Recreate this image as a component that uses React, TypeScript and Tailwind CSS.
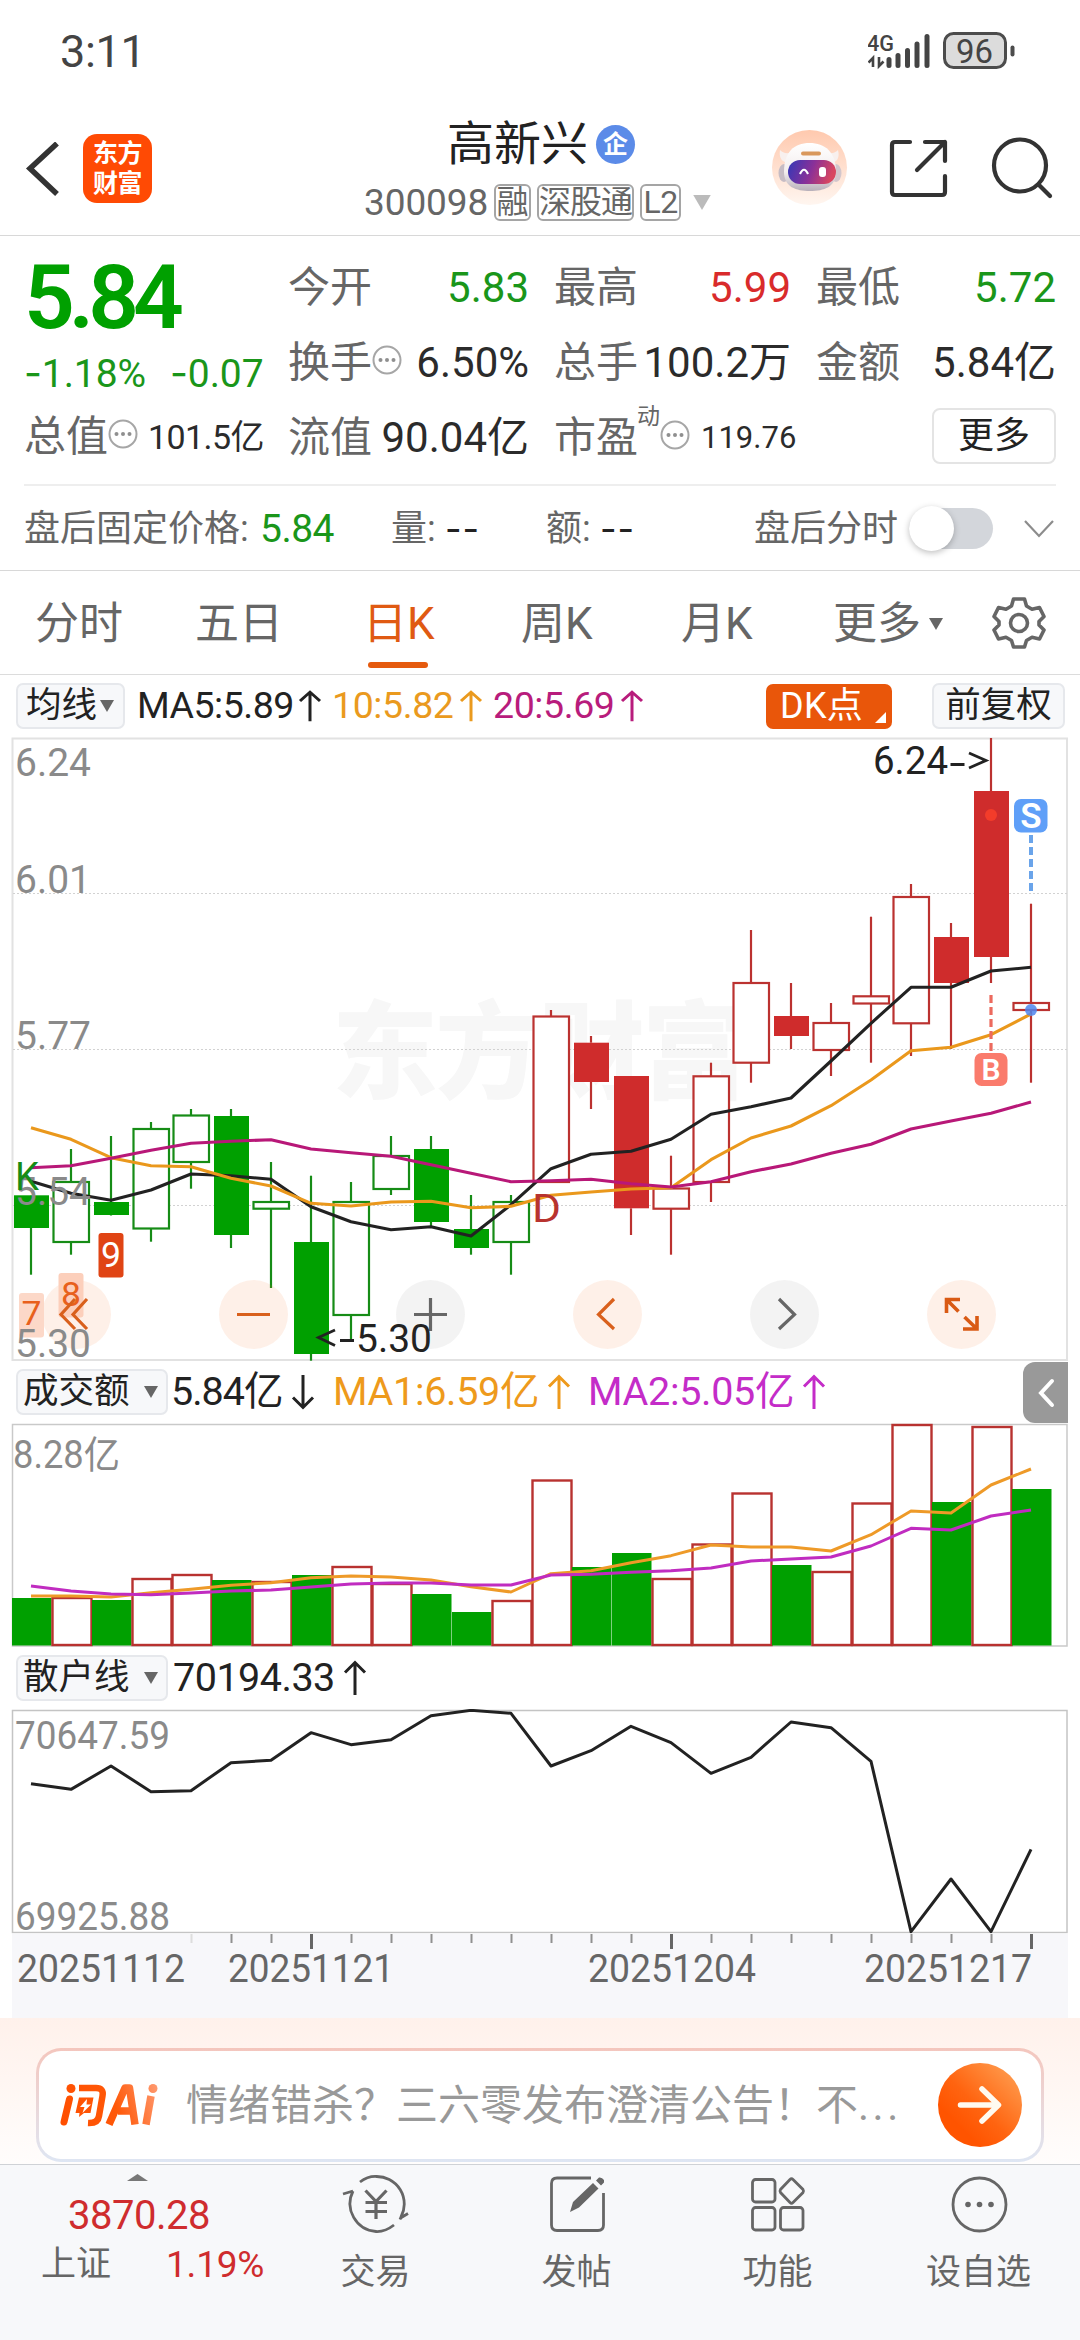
import React from "react";

type Candle = {
  kind: "gf" | "gh" | "rf" | "rh";
  top: number;
  bottom: number;
  high: number;
  low: number;
};

const GREEN = "#00a000";
const RED = "#cf2c2c";

const c = (kind: Candle["kind"], top: number, bottom: number, high: number, low: number): Candle => ({ kind, top, bottom, high, low });

const candles: Candle[] = [
  c("gf", 1195.3, 1228, 1195, 1274.7),
  c("gh", 1182, 1242, 1149, 1254.7),
  c("gf", 1202, 1215, 1136, 1215.5),
  c("gh", 1129, 1228.5, 1122, 1241.7),
  c("gh", 1115.5, 1162, 1109, 1188.7),
  c("gf", 1116, 1235, 1109, 1248),
  c("gh", 1202, 1208.7, 1162, 1288),
  c("gf", 1242, 1354, 1175.7, 1360.7),
  c("gh", 1202, 1315, 1182, 1340),
  c("gh", 1156, 1189, 1136, 1195),
  c("gf", 1149, 1222, 1136, 1226),
  c("gf", 1229, 1248, 1195, 1254.7),
  c("gh", 1202, 1242, 1195, 1274.7),
  c("rh", 1016.5, 1182, 1010, 1182),
  c("rf", 1042.7, 1082, 1036, 1109),
  c("rf", 1076, 1208.3, 1076, 1235),
  c("rh", 1188.5, 1208.7, 1155.7, 1254.7),
  c("rh", 1076.3, 1182, 1062.7, 1202),
  c("rh", 983, 1062.7, 930, 1082.7),
  c("rf", 1016, 1036, 983, 1049),
  c("rh", 1023, 1050, 1003, 1076),
  c("rh", 996.3, 1003.5, 916.7, 1062.7),
  c("rh", 897, 1023.3, 884, 1056),
  c("rf", 937, 983, 923, 1049),
  c("rf", 791, 957, 738, 983),
  c("rh", 1003, 1010, 903.7, 1082.7),
];

const ma5 = [1181.3, 1193.3, 1200.3, 1190, 1174, 1175.7, 1179.3, 1206.7, 1221.7, 1229.7, 1226.7, 1236, 1204.7, 1168.7, 1154.3, 1151.3, 1139.3, 1114.3, 1106.7, 1098, 1061, 1023.3, 987.3, 987.3, 971, 967.3];
const ma10 = [1127.7, 1139.3, 1157.7, 1165.7, 1166.7, 1178.3, 1186, 1203.3, 1206, 1202, 1201.3, 1207.7, 1206.3, 1195.3, 1192, 1189, 1187.7, 1159.7, 1138, 1126, 1105.7, 1080, 1050.7, 1047.3, 1034.7, 1014];
const ma20 = [1167.7, 1165.7, 1158.3, 1150.3, 1143.3, 1141.3, 1139.7, 1149, 1152.7, 1156.3, 1164.7, 1173.3, 1181.7, 1180.7, 1179.3, 1183.7, 1187, 1181.7, 1171.7, 1164, 1153.3, 1144.3, 1129, 1121, 1113.3, 1102];

const volumes: [string, number][] = [
  ["g", 1598], ["r", 1598], ["g", 1600], ["r", 1579], ["r", 1575], ["g", 1580], ["r", 1582], ["g", 1575], ["r", 1567],
  ["r", 1584], ["g", 1594], ["g", 1612], ["r", 1601], ["r", 1480.5], ["g", 1567], ["g", 1553], ["r", 1579], ["r", 1544.5],
  ["r", 1493.5], ["g", 1565], ["r", 1572], ["r", 1503.5], ["r", 1425], ["g", 1502], ["r", 1427], ["g", 1489],
];
const volMa1 = [708, 708, 711, 698, 688, 676, 668, 653, 648, 651, 660, 680, 696, 641, 632, 608, 587, 555, 561, 561, 573, 524, 453, 459, 375, 327].map((v) => 1360 + v / 3);
const volMa2 = [678, 693, 702, 704, 699, 693, 690, 681, 672, 669, 669, 675, 675, 645, 643, 637, 632, 624, 603, 597, 591, 558, 505, 510, 468, 450].map((v) => 1360 + v / 3);
const retail = [401, 418, 348, 425, 422, 338, 331, 248, 284, 269, 197, 181, 190, 348, 302, 229, 278, 370, 322, 216, 233, 334, 845, 687, 845, 598].map((v) => 1650 + v / 3);

const cx = (i: number) => 31 + i * 40;
const pts = (ys: number[]) => ys.map((y, i) => `${cx(i)},${y}`).join(" ");

const CandleShape = ({ d, i }: { d: Candle; i: number }) => {
  const color = d.kind[0] === "g" ? GREEN : RED;
  const line = d.kind[0] === "g" ? "#168c16" : "#bb3230";
  const x = cx(i);
  return (
    <g>
      {d.high < d.top && <line x1={x} x2={x} y1={d.high} y2={d.top} stroke={line} strokeWidth="2.2" />}
      {d.low > d.bottom && <line x1={x} x2={x} y1={d.bottom} y2={d.low} stroke={line} strokeWidth="2.2" />}
      {d.kind[1] === "f" ? (
        <rect x={x - 17} y={d.top} width="35" height={d.bottom - d.top} fill={color} />
      ) : (
        <rect x={x - 17.5} y={d.top} width="35.5" height={d.bottom - d.top} fill="#fff" stroke={line} strokeWidth="2.2" />
      )}
    </g>
  );
};

const Label = ({ x, y, w, size = 38, fill = "#8a8a8a", children }: { x: number; y: number; w: number; size?: number; fill?: string; children: string }) => (
  <text x={x} y={y} textLength={w} lengthAdjust="spacingAndGlyphs" fontSize={size} fill={fill}>
    {children}
  </text>
);

const Hy = ({ n = 1 }: { n?: number }) => <span className="font-['Inter']">{"-".repeat(n)}</span>;

const Dots = () => (
  <svg className="size-[30px] shrink-0 -translate-y-[3px]" viewBox="0 0 30 30">
    <circle cx="15" cy="15" r="13.5" fill="none" stroke="#a6a6a6" strokeWidth="2" />
    {[8.5, 15, 21.5].map((x) => (
      <circle key={x} cx={x} cy="15" r="2" fill="#8f8f8f" />
    ))}
  </svg>
);

const Tri = ({ className }: { className: string }) => (
  <svg className={className} viewBox="0 0 14 12">
    <path d="M0 0H14L7 12Z" fill="currentColor" />
  </svg>
);

const Arrow = ({ className = "" }: { className?: string }) => (
  <svg className={`h-[34px] w-[20px] shrink-0 overflow-visible ${className}`} viewBox="0 0 20 34" fill="none" stroke="currentColor" strokeWidth="3">
    <path d="M10 34V1.500M0 11.500L10 1.500L20 11.500" />
  </svg>
);

const StatusBar = () => (
  <div className="flex h-[102px] items-center pl-[60px] text-[#444]">
    <span className="w-[808px] text-[45px] leading-none tracking-[-0.3px]">3:11</span>
    <svg className="h-[40px] w-[150px]" viewBox="868 31 150 40">
      <text x="867" y="51" fontSize="22.500" fontWeight="500" textLength="27" lengthAdjust="spacingAndGlyphs" fill="#444">4G</text>
      <path d="M873 67V58L868.500 62.500M879 57V66L883.500 61.500" stroke="#444" strokeWidth="2.600" fill="none" />
      {[[889, 58], [898, 54], [907.5, 49], [917, 42.5], [927, 35]].map(([x, y]) => (
        <line key={x} x1={x} x2={x} y1={y + 1.5} y2="65.500" stroke="#444" strokeWidth="5" strokeLinecap="round" />
      ))}
      <rect x="944.500" y="33.500" width="61" height="34" rx="9" fill="#dcdcdc" stroke="#4c4c4c" strokeWidth="3" />
      <rect x="1010.500" y="45.500" width="4" height="11" rx="2" fill="#4c4c4c" />
      <text x="956" y="62.500" fontSize="34" textLength="37" lengthAdjust="spacingAndGlyphs" fill="#444">96</text>
    </svg>
  </div>
);

const Header = () => (
  <div className="flex h-[133px] items-start">
    <svg className="mt-[40px] ml-[24px] h-[54px] w-[38px]" viewBox="0 0 38 54" fill="none" stroke="#333" strokeWidth="5.500">
      <path d="M33 1.500L6 26.500L33 52" />
    </svg>
    <div className="mt-[32px] ml-[21px] flex h-[69px] w-[69px] flex-col items-center justify-center rounded-[14px] bg-[#ff4a04] text-[25px] leading-[30px] font-bold tracking-[-0.5px] text-white">
      <span>东方</span>
      <span>财富</span>
    </div>
    <div className="ml-[212px] w-[360px] pt-[16px]">
      <div className="flex items-center pl-[83px]">
        <span className="text-[47px] leading-[52px] text-[#222]">高新兴</span>
        <span className="mt-[1px] ml-[8px] flex size-[39px] items-center justify-center rounded-full bg-[#5b8be8] text-[25px] leading-none font-bold text-white">企</span>
      </div>
      <div className="mt-[13px] flex h-[38px] items-center gap-[6px] text-[32px] leading-none text-[#666]">
        <span className="w-[124px] text-[37px] tracking-[-0.1px]">300098</span>
        <span className="flex h-[37px] w-[37px] items-center justify-center rounded-[6px] border-2 border-[#a5a5a5]">融</span>
        <span className="flex h-[37px] w-[97px] items-center justify-center rounded-[6px] border-2 border-[#a5a5a5] tracking-[-1px]">深股通</span>
        <span className="flex h-[37px] w-[41px] items-center justify-center rounded-[6px] border-2 border-[#a5a5a5] tracking-[-0.5px]">L2</span>
        <Tri className="ml-[4px] h-[15px] w-[22px] shrink-0 text-[#bbb]" />
      </div>
    </div>
    <svg className="ml-[48px] h-[76px] w-[76px] translate-y-[28px]" viewBox="0 0 76 76">
      <defs>
        <linearGradient id="halo" x1="0" y1="0" x2="0" y2="1">
          <stop offset="0" stopColor="#ffc9ae" />
          <stop offset="1" stopColor="#fff6f0" />
        </linearGradient>
        <linearGradient id="visor" x1="0" y1="0" x2="1" y2="0.200">
          <stop offset="0" stopColor="#3238b8" />
          <stop offset="0.550" stopColor="#8a3098" />
          <stop offset="1" stopColor="#d84660" />
        </linearGradient>
        <linearGradient id="helmet" x1="0" y1="0" x2="0" y2="1">
          <stop offset="0" stopColor="#fff" />
          <stop offset="0.600" stopColor="#f3eeee" />
          <stop offset="1" stopColor="#b8b0ba" />
        </linearGradient>
      </defs>
      <circle cx="37.500" cy="37.500" r="37.500" fill="url(#halo)" />
      <path d="M8 20Q6 32 17 33L22 22Q12 25 8 20ZM66 20Q69 32 58 33L52 22Q62 25 66 20Z" fill="#f8f0ee" />
      <ellipse cx="12" cy="43" rx="5.500" ry="9" fill="#c6bcc4" />
      <ellipse cx="64" cy="43" rx="5.500" ry="9" fill="#d2c6cc" />
      <path d="M12 42C12 22 22 13 37.500 13S64 22 64 42C64 57 52 61 38 61S12 57 12 42Z" fill="url(#helmet)" />
      <rect x="29" y="21.500" width="20" height="4" rx="2" fill="#d9985c" />
      <rect x="16" y="30" width="48" height="24" rx="12" fill="url(#visor)" />
      <path d="M28 44Q32 35.500 36 44" fill="none" stroke="#fff" strokeWidth="2.200" />
      <rect x="47" y="37" width="7" height="10" rx="3" fill="#fff" />
    </svg>
    <svg className="mt-[36px] ml-[40px] h-[62px] w-[62px]" viewBox="0 0 62 62" fill="none" stroke="#333" strokeWidth="4.200" strokeLinecap="round" strokeLinejoin="round">
      <path d="M22 4H7Q4 4 4 7V54Q4 57 7 57H54Q57 57 57 54V38M37 4H57V23M57 4L29 32" />
    </svg>
    <svg className="mt-[34px] ml-[39px] h-[66px] w-[66px]" viewBox="0 0 66 66" fill="none" stroke="#333" strokeWidth="4.200" strokeLinecap="round">
      <circle cx="31" cy="29.500" r="26" />
      <path d="M50 49L61 60" />
    </svg>
  </div>
);

const Cell = ({ label, children, tone = "text-[#2b2b2b]" }: { label: React.ReactNode; children: React.ReactNode; tone?: string }) => (
  <div className="flex items-center justify-between">
    <span className="flex items-center text-[#666]">{label}</span>
    <span className={tone}>{children}</span>
  </div>
);

const Quote = () => (
  <div className="border-b border-[#d8d8d8] text-[42px] leading-none">
    <div className="flex pt-[14px] pl-[24px]">
      <div className="w-[264px]">
        <div className="pt-[4px] text-[89px] leading-[88px] font-semibold tracking-[-6px] text-[#00a000]">5.84</div>
        <div className="mt-[3px] flex h-[56px] items-center text-[39px] tracking-[-0.1px] text-[#1a961a]">
          <span className="w-[146px]"><Hy />1.18%</span>
          <span><Hy />0.07</span>
        </div>
        <div className="flex h-[72px] items-center text-[#666]">
          <span>总值</span>
          <Dots />
          <span className="ml-[10px] text-[34px] tracking-[-0.6px] text-[#2b2b2b]">101.5亿</span>
        </div>
      </div>
      <div className="grid grid-cols-[241px_237px_240px] grid-rows-[75px_75px_75px] gap-x-[25px]">
        <Cell label="今开" tone="text-[#1a961a]">5.83</Cell>
        <Cell label="最高" tone="text-[#d92b2b]">5.99</Cell>
        <Cell label="最低" tone="text-[#1a961a]">5.72</Cell>
        <Cell label={<>换手<Dots /></>}>6.50%</Cell>
        <Cell label="总手">100.2万</Cell>
        <Cell label="金额">5.84亿</Cell>
        <Cell label="流值">90.04亿</Cell>
        <div className="flex items-center text-[#666]">
          <span>市盈</span>
          <span className="-mt-[42px] ml-[-1px] text-[23px]">动</span>
          <Dots />
          <span className="ml-[11px] text-[31px] text-[#2b2b2b]">119.76</span>
        </div>
        <div className="flex items-center justify-end">
          <button className="h-[56px] w-[124px] -translate-y-[2px] rounded-[8px] border-2 border-[#e4e4e4] text-[36px] leading-none text-[#222]">更多</button>
        </div>
      </div>
    </div>
    <div className="mx-[24px] mt-[9px] h-[2px] bg-[#eeeeee]" />
    <div className="flex h-[84px] items-center pt-[2px] pl-[24px] text-[36px] text-[#666]">
      <span className="w-[236px]">盘后固定价格:</span>
      <span className="w-[131px] text-[39px] tracking-[-0.5px] text-[#1a961a]">5.84</span>
      <span className="w-[54px]">量:</span>
      <span className="w-[101px] tracking-[1px] text-[#222]"><Hy n={2} /></span>
      <span className="w-[54px]">额:</span>
      <span className="w-[154px] tracking-[1px] text-[#222]"><Hy n={2} /></span>
      <span className="w-[155px]">盘后分时</span>
      <span className="relative h-[41px] w-[84px] -translate-y-px rounded-full bg-[#d3d6db]">
        <span className="absolute top-[-2px] left-0 size-[45px] rounded-full bg-white shadow-[0_2px_6px_rgba(0,0,0,0.25)]" />
      </span>
      <svg className="ml-[31px] h-[18px] w-[30px]" viewBox="0 0 30 18" fill="none" stroke="#8c8c8c" strokeWidth="2.200">
        <path d="M1 1L15 16L29 1" />
      </svg>
    </div>
  </div>
);

const Tabs = () => (
  <div className="flex h-[104px] items-center border-b border-[#dcdcdc] pt-[2px] pl-[35px] text-[44px] leading-none text-[#666]">
    <span className="w-[160px]">分时</span>
    <span className="w-[168px]">五日</span>
    <span className="relative w-[158px] text-[#e05a12]">
      日K
      <span className="absolute bottom-[-22px] left-[5px] h-[6px] w-[60px] rounded-full bg-[#e55a0e]" />
    </span>
    <span className="w-[160px]">周K</span>
    <span className="w-[152px]">月K</span>
    <span className="w-[96px]">更多</span>
    <Tri className="h-[12px] w-[14px] text-[#666]" />
    <svg className="ml-[49px] h-[54px] w-[54px] -translate-y-px" viewBox="0 0 54 54" fill="none" stroke="#666" strokeWidth="3.600" strokeLinejoin="round">
      <path d="M21.500 3H32.500L34.500 10L40 13.200L47.500 11.500L52 20.500L47 25.500V29L52 34L47.500 43L40 41.300L34.500 44.500L32.500 51H21.500L19.500 44.500L14 41.300L6.500 43L2 34L7 29V25.500L2 20.500L6.500 11.500L14 13.200L19.500 10Z" />
      <circle cx="27" cy="27" r="8.500" />
    </svg>
  </div>
);

const chip = "flex h-[46px] items-center rounded-[7px] border-2 border-[#e6e8ec] bg-[#f7f8fa] text-[35.500px] text-[#222]";

const MaRow = () => (
  <div className="flex h-[62px] items-center pl-[16px] text-[37.500px] leading-none text-[#222]">
    <div className={`${chip} w-[109px] pl-[8px]`}>
      <span className="w-[74px]">均线</span>
      <Tri className="h-[12px] w-[14px] text-[#666]" />
    </div>
    <span className="ml-[12px] w-[163px] tracking-[-0.5px]">MA5:5.89</span>
    <Arrow className="scale-y-90" />
    <span className="ml-[12px] w-[129px] tracking-[-0.4px] text-[#ea9a1e]">10:5.82</span>
    <Arrow className="scale-y-90 text-[#ea9a1e]" />
    <span className="ml-[12px] w-[129px] tracking-[-0.4px] text-[#b81c7c]">20:5.69</span>
    <Arrow className="scale-y-90 text-[#b81c7c]" />
    <div className="relative ml-[124px] flex h-[45px] w-[126px] items-center rounded-[7px] bg-[#e9560a] pl-[14px] text-[36px] tracking-[0.3px] text-white">
      DK点
      <svg className="absolute right-[6px] bottom-[6px] size-[11px]" viewBox="0 0 11 11"><path d="M11 0V11H0Z" fill="#fff" /></svg>
    </div>
    <div className={`${chip} ml-[40px] w-[133px] justify-center`}>前复权</div>
  </div>
);

const toolXs = [76.5, 253.5, 430.5, 607.5, 784.5, 961.5];

const PriceChart = () => (
  <svg className="block h-[624px] w-[1080px] overflow-visible" viewBox="0 737 1080 624">
    <rect x="12.500" y="738.500" width="1054.500" height="621.500" fill="#fff" stroke="#e2e2e2" strokeWidth="2" />
    <g fontWeight="900" fontSize="106" fill="#f7f7f7">
      <text x="332" y="1090" textLength="416">东方财富</text>
    </g>
    {[893.5, 1049.5, 1205.5].map((y) => (
      <line key={y} x1="13" x2="1067" y1={y} y2={y} stroke="#d2d2d2" strokeWidth="1" strokeDasharray="2 2" />
    ))}
    {candles.map((d, i) => (
      <CandleShape key={i} d={d} i={i} />
    ))}
    {toolXs.map((x, i) => (
      <circle key={x} cx={x} cy="1314.500" r="34.500" fill={i === 2 || i === 4 ? "#777" : "#fa7a30"} fillOpacity={i === 2 || i === 4 ? 0.09 : 0.11} />
    ))}
    <rect x="19" y="1293" width="25" height="44.500" rx="3" fill="#fcd8c8" />
    <rect x="58.500" y="1273" width="25" height="44.500" rx="3" fill="#fccfbb" />
    <rect x="98.500" y="1233" width="25" height="44.500" rx="3" fill="#e04414" />
    <Label x={21.5} y={1325} w={20} size={34} fill="#e8601c">7</Label>
    <Label x={61} y={1306} w={20} size={34} fill="#e8601c">8</Label>
    <Label x={101} y={1267} w={20} size={35} fill="#fff">9</Label>
    <g fill="none" strokeWidth="3.100" strokeLinejoin="round">
      <polyline points={pts(ma5)} stroke="#222" />
      <polyline points={pts(ma10)} stroke="#ea981c" />
      <polyline points={pts(ma20)} stroke="#b81878" />
    </g>
    <Label x={15} y={776} w={76}>6.24</Label>
    <Label x={15} y={893} w={76}>6.01</Label>
    <Label x={15} y={1049} w={76}>5.77</Label>
    <Label x={15} y={1205} w={76}>5.54</Label>
    <Label x={15} y={1357} w={76}>5.30</Label>
    <text x="15" y="1190" fontSize="39" fill="#168c16" textLength="24" lengthAdjust="spacingAndGlyphs">K</text>
    <text x="532" y="1222" fontSize="38" fill="#b8332f" textLength="29" lengthAdjust="spacingAndGlyphs">D</text>
    <g fill="none" strokeWidth="3.200">
      <path d="M75 1299L61 1314.500L75 1329M87 1299L73 1314.500L87 1329" stroke="#d9601c" />
      <path d="M237 1314.500H270" stroke="#d9601c" />
      <path d="M414 1314.500H447M430.500 1298V1331" stroke="#666" />
      <path d="M614 1299L598.500 1314.500L614 1329" stroke="#d9601c" />
      <path d="M779 1299L794.500 1314.500L779 1329" stroke="#666" />
      <path d="M960 1299.500H946.500V1313M947 1300L958.500 1311.500M963 1329H977V1316M976.500 1328.500L964.500 1317" stroke="#d95a14" strokeWidth="3.600" />
    </g>
    <g fill="#222">
      <text x="873" y="773.500" fontSize="39" textLength="75" lengthAdjust="spacingAndGlyphs">6.24</text>
      <path d="M950.500 764.500H964.500M969 753L986 760.500L969 768" fill="none" stroke="#222" strokeWidth="2.800" />
      <text x="356" y="1352" fontSize="39" textLength="76" lengthAdjust="spacingAndGlyphs">5.30</text>
      <path d="M335 1330L318.500 1337.500L335 1345.500M340 1340.500H354" fill="none" stroke="#222" strokeWidth="2.800" />
    </g>
    <circle cx="991" cy="815" r="6" fill="#f33c2a" />
    <line x1="991" x2="991" y1="995" y2="1051" stroke="#ec6a5e" strokeWidth="3.200" strokeDasharray="8 4" />
    <rect x="974.500" y="1053" width="33" height="33" rx="7" fill="#fa7b6c" />
    <text x="991" y="1080" fontSize="30" fontWeight="600" fill="#fff" textAnchor="middle">B</text>
    <rect x="1014" y="799" width="33.500" height="33.500" rx="7" fill="#5f9ff8" />
    <text x="1031" y="828" fontSize="35" fontWeight="600" fill="#fff" textAnchor="middle">S</text>
    <line x1="1031" x2="1031" y1="835" y2="891" stroke="#6aa4ea" strokeWidth="4" strokeDasharray="8 4" />
    <circle cx="1031" cy="1010" r="6" fill="#4f86ee" fillOpacity="0.850" />
  </svg>
);

const VolumeRow = () => (
  <div className="relative flex h-[62px] items-center pl-[16px] text-[39.500px] leading-none text-[#222]">
    <div className={`${chip} w-[152px] pl-[5px]`}>
      <span className="w-[121px]">成交额</span>
      <Tri className="h-[12px] w-[14px] text-[#666]" />
    </div>
    <span className="ml-[3px] w-[122px] tracking-[-1px]">5.84亿</span>
    <Arrow className="rotate-180" />
    <span className="ml-[20px] w-[216px] tracking-[-0.3px] text-[#ee9a1c]">MA1:6.59亿</span>
    <Arrow className="text-[#ee9a1c]" />
    <span className="ml-[19px] w-[216px] tracking-[-0.3px] text-[#c42cc8]">MA2:5.05亿</span>
    <Arrow className="text-[#c42cc8]" />
    <div className="absolute top-px right-[12px] flex h-[61px] w-[45px] items-center justify-center rounded-l-[12px] bg-[#999]">
      <svg className="h-[30px] w-[18px]" viewBox="0 0 18 30" fill="none" stroke="#fff" strokeWidth="4" strokeLinecap="round"><path d="M15 3L4 15L15 27" /></svg>
    </div>
  </div>
);

const VolumeChart = () => (
  <svg className="block h-[224px] w-[1080px]" viewBox="0 1423 1080 224">
    <rect x="12.500" y="1424.500" width="1054.500" height="221.500" fill="#fff" stroke="#c9c9c9" strokeWidth="1.500" />
    {volumes.map(([k, y], i) =>
      k === "g" ? (
        <rect key={i} x={12 + 40 * i} y={y} width="39.500" height={1645.5 - y} fill={GREEN} />
      ) : (
        <rect key={i} x={12.5 + 40 * i} y={y} width="39" height={1645 - y} fill="#fff" stroke="#b83230" strokeWidth="2.400" />
      )
    )}
    <g fill="none" strokeWidth="3" strokeLinejoin="round">
      <polyline points={pts(volMa1)} stroke="#ee9a28" />
      <polyline points={pts(volMa2)} stroke="#c02cc0" />
    </g>
    <Label x={13} y={1468} w={107}>8.28亿</Label>
  </svg>
);

const RetailRow = () => (
  <div className="flex h-[62px] items-center pl-[16px] text-[39.500px] leading-none text-[#222]">
    <div className={`${chip} w-[152px] pl-[5px]`}>
      <span className="w-[121px]">散户线</span>
      <Tri className="h-[12px] w-[14px] text-[#666]" />
    </div>
    <span className="ml-[5px] w-[172px] tracking-[-0.5px]">70194.33</span>
    <Arrow />
  </div>
);

const RetailChart = () => (
  <svg className="block h-[309px] w-[1080px]" viewBox="0 1709 1080 309">
    <rect x="12.500" y="1710.500" width="1054.500" height="222" fill="#fff" stroke="#c4c4c4" strokeWidth="1.500" />
    <polyline points={pts(retail)} fill="none" stroke="#222" strokeWidth="3" strokeLinejoin="round" />
    <Label x={15} y={1749} w={155} size={38}>70647.59</Label>
    <Label x={15} y={1930} w={155} size={38}>69925.88</Label>
    <rect x="12" y="1933.500" width="1056" height="85" fill="#f7f7fa" />
    {Array.from({ length: 22 }, (_, k) => k + 4).map((i) => {
      const major = i === 7 || i === 16 || i === 25;
      return <line key={i} x1={cx(i) + 0.5} x2={cx(i) + 0.5} y1="1934" y2={major ? 1949 : 1943} stroke={i === 4 ? "#ddd" : major ? "#666" : "#909090"} strokeWidth={major ? 3 : 2} />;
    })}
    <Label x={17} y={1982} w={168} fill="#666">20251112</Label>
    <Label x={228} y={1982} w={166} fill="#666">20251121</Label>
    <Label x={588} y={1982} w={168} fill="#666">20251204</Label>
    <Label x={864} y={1982} w={168} fill="#666">20251217</Label>
  </svg>
);

const AskAi = () => (
  <div className="h-[146px] bg-linear-to-b from-[#fff1eb] to-[#fffdfc] pt-[30px] pl-[36px]">
    <div className="h-[114px] w-[1008px] rounded-[25px] bg-linear-to-b from-[#f4c6bd] to-[#dee6f3] p-[3px]">
      <div className="flex h-full items-center rounded-[22px] bg-white">
        <svg className="ml-[20px] h-[46px] w-[100px]" viewBox="0 0 100 46">
          <defs>
            <linearGradient id="brand" gradientUnits="userSpaceOnUse" x1="0" y1="40" x2="100" y2="6">
              <stop offset="0" stopColor="#ff4e00" />
              <stop offset="0.550" stopColor="#ff5808" />
              <stop offset="1" stopColor="#ff9a70" />
            </linearGradient>
          </defs>
          <g fill="none" stroke="url(#brand)" strokeLinecap="round" strokeLinejoin="round">
            <path d="M10.500 17L5 40" strokeWidth="7" />
            <path d="M20 6H37Q45 6 43.500 14L40 34Q39 41.500 29 41" strokeWidth="6.500" strokeLinecap="butt" />
            <path d="M50 42.500L66 6H70.500L76 42.500M59 29H71" strokeWidth="7.500" strokeLinecap="butt" />
            <path d="M92 14L87 42.500" strokeWidth="7.500" strokeLinecap="butt" />
          </g>
          <g fill="url(#brand)">
            <circle cx="12" cy="6.500" r="4.500" />
            <circle cx="94" cy="6.500" r="4.500" />
            <path d="M20 15.500H34.500L31.500 31H25L20 35L20.500 31H16.500Z" />
          </g>
          <path d="M28 17L21 25H25.500L23.500 31L32 22.500H27.500Z" fill="#fff" />
        </svg>
        <span className="ml-[27px] w-[751px] pt-px text-[42px] leading-none text-[#999]">情绪错杀？三六零发布澄清公告！不<span className="tracking-[3.500px]">...</span></span>
        <svg className="size-[86px]" viewBox="0 0 86 86">
          <defs>
            <linearGradient id="send" x1="0.200" y1="0.700" x2="0.850" y2="0.050">
              <stop offset="0" stopColor="#ff5400" />
              <stop offset="0.350" stopColor="#ff6410" />
              <stop offset="1" stopColor="#ff9a4c" />
            </linearGradient>
          </defs>
          <circle cx="43" cy="43" r="42" fill="url(#send)" />
          <path d="M23.500 43H61M45 27L61.500 43L45 59" fill="none" stroke="#fffaf0" strokeWidth="5.500" strokeLinecap="round" strokeLinejoin="round" />
        </svg>
      </div>
    </div>
  </div>
);

const NavItem = ({ label, children }: { label: string; children: React.ReactNode }) => (
  <div className="flex w-[201px] flex-col items-center pt-[8px]">
    <svg className="h-[62px] w-[70px]" viewBox="0 0 70 62" fill="none" stroke="#666" strokeWidth="2.800">
      {children}
    </svg>
    <span className="mt-[20px]">{label}</span>
  </div>
);

const BottomBar = () => (
  <div className="flex h-[176px] border-t border-[#cfd2d6] bg-[#f7f8fa] text-[35px] leading-none text-[#666]">
    <div className="w-[275px]">
      <svg className="mt-[9px] ml-[127px] h-[7px] w-[21px]" viewBox="0 0 21 7"><path d="M0 7H21L10.500 0Z" fill="#777" /></svg>
      <div className="mt-[15px] pl-[68px] text-[40px] tracking-[-0.5px] text-[#cf2c2e]">3870.28</div>
      <div className="mt-[10px] flex items-center pl-[41px]">
        <span className="w-[125px]">上证</span>
        <span className="text-[37px] tracking-[-0.2px] text-[#cf2c2e]">1.19%</span>
      </div>
    </div>
    <NavItem label="交易">
      <path d="M19 9Q27 3 35.500 3.500A27.500 27.500 0 0 1 60 44L59 46.500M59.500 45L67 40.500M53 52Q44 59 35 58.500A28 28 0 0 1 12 18M2 21L12 18" />
      <path d="M24.500 17.500L35 28.500L45.500 17.500M24.500 29.500H46M24.500 38.500H46M35 28.500V46" strokeWidth="3.200" />
    </NavItem>
    <NavItem label="发帖">
      <path d="M49 5H15Q9.500 5 9.500 10.500V52Q9.500 57.500 15 57.500H56Q61.500 57.500 61.500 52V20" />
      <path d="M28 39L31 29L51 10L56.500 15.500L37 34.500ZM54 7.500L57 4.500Q60 4 62 7L62 9.500L59 12.500Z" fill="#666" stroke="none" />
    </NavItem>
    <NavItem label="功能">
      <rect x="9.500" y="6.500" width="22.500" height="22.500" rx="3" />
      <rect x="9.500" y="34.500" width="22.500" height="22.500" rx="3" />
      <rect x="37.500" y="34.500" width="22.500" height="22.500" rx="3" />
      <path d="M47 6.500Q48.500 5 50 6.500L60 16.500Q61 18 60 19.500L50 29.500Q48.500 31 47 29.500L37.500 19.500Q36.500 18 37.500 16.500Z" />
    </NavItem>
    <NavItem label="设自选">
      <circle cx="35.500" cy="31.500" r="26.500" />
      {[24, 35.5, 47].map((x) => (
        <circle key={x} cx={x} cy="31.500" r="2.800" fill="#666" stroke="none" />
      ))}
    </NavItem>
  </div>
);

export default function App() {
  return (
    <div className="h-[2340px] w-[1080px] overflow-hidden bg-white font-['Roboto','Noto_Sans_CJK_SC',sans-serif] whitespace-nowrap">
      <div className="border-b border-[#d8d8d8]">
        <StatusBar />
        <Header />
      </div>
      <Quote />
      <Tabs />
      <MaRow />
      <PriceChart />
      <VolumeRow />
      <VolumeChart />
      <RetailRow />
      <RetailChart />
      <AskAi />
      <BottomBar />
    </div>
  );
}
